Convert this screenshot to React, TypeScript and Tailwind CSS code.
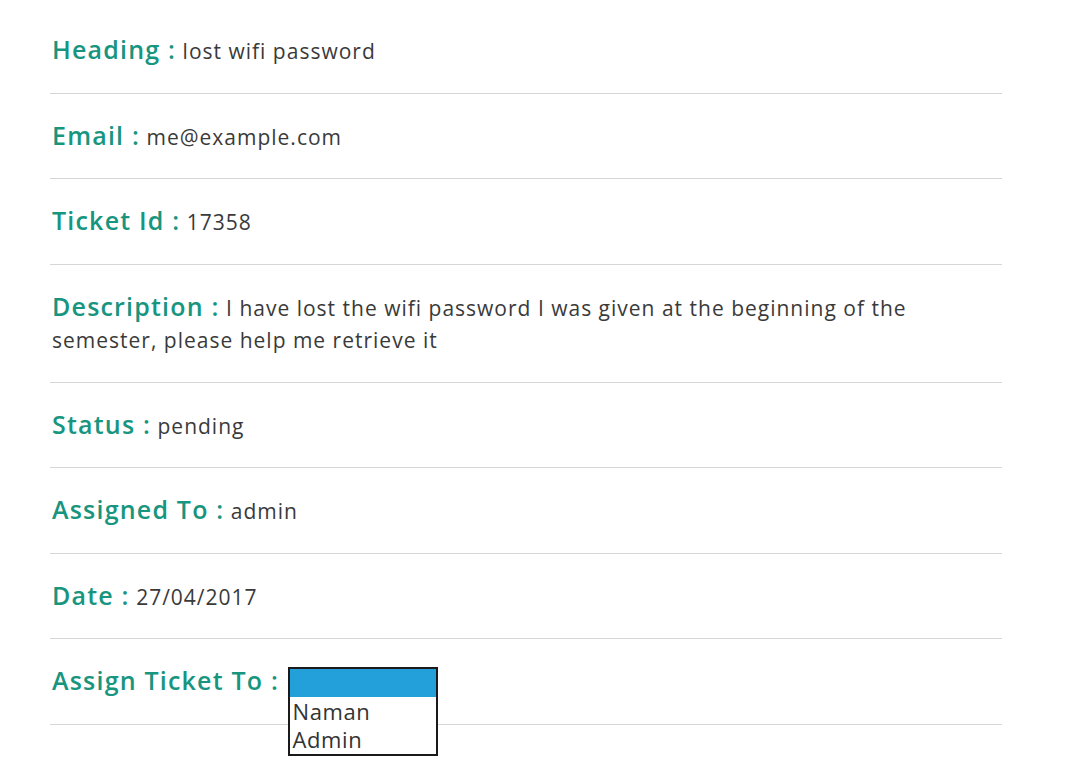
import React from "react";

const rows: { label: string; value: string }[] = [
  { label: "Heading", value: "lost wifi password" },
  { label: "Email", value: "me@example.com" },
  { label: "Ticket Id", value: "17358" },
  {
    label: "Description",
    value:
      "I have lost the wifi password I was given at the beginning of the semester, please help me retrieve it",
  },
  { label: "Status", value: "pending" },
  { label: "Assigned To", value: "admin" },
  { label: "Date", value: "27/04/2017" },
];

export default function App() {
  return (
    <div
      className="min-h-[769px] bg-white pt-[8px] pl-[50px]"
      style={{ fontFamily: '"Open Sans", "Liberation Sans", sans-serif' }}
    >
      <div className="w-[952px]">
        {rows.map((r) => (
          <div
            key={r.label}
            className="border-b border-[#d6d6d6] pt-[27px] pb-[25px] pl-[2px] pr-[60px] text-[21px] leading-[32.5px] tracking-[1px] text-[#3a3a3a]"
          >
            <span className="text-[25px] leading-[20px] font-semibold tracking-[1.2px] text-[#17957f]">
              {r.label} :
            </span>{" "}
            <span>{r.value}</span>
          </div>
        ))}
        <div className="h-[85.5px] border-b border-[#d6d6d6] pt-[27px] pl-[2px] text-[21px] leading-[32.5px] tracking-[1px]">
          <span className="text-[25px] leading-[20px] font-semibold tracking-[1.2px] text-[#17957f]">
            Assign Ticket To :
          </span>{" "}
          <span className="relative ml-[3px] inline-block h-[32px] w-[150px] align-top">
            <div className="absolute left-0 top-[1px] z-10 w-[150px] border-2 border-[#1a1a1a] bg-white pb-[1px] text-[22px] leading-[28px] tracking-[0.6px] text-[#333]">
              <div className="h-[28px] bg-[#239fda]"></div>
              <div className="pl-[2px]">Naman</div>
              <div className="pl-[2px]">Admin</div>
            </div>
          </span>
        </div>
      </div>
    </div>
  );
}
